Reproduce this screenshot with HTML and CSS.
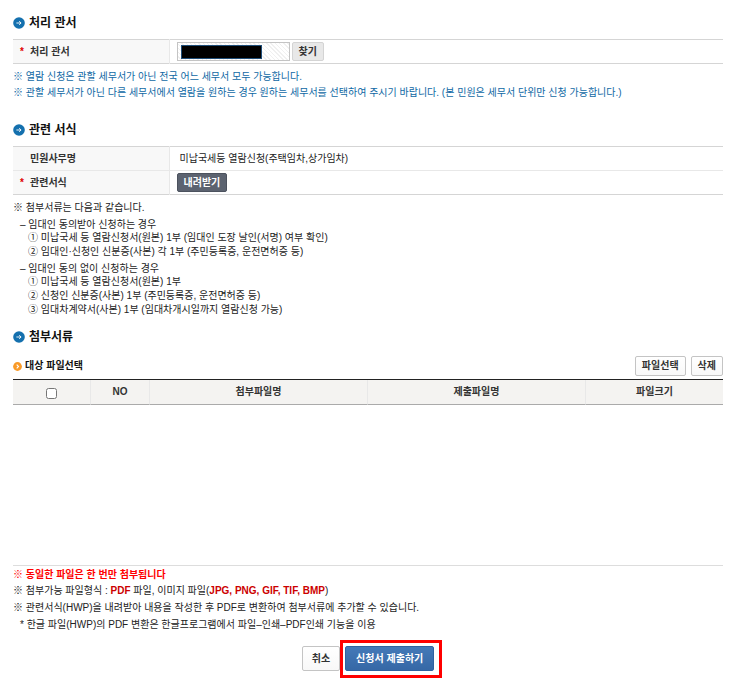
FILE: index.html
```html
<!DOCTYPE html>
<html lang="ko">
<head>
    <meta charset="UTF-8">
    <meta name="viewport" content="width=device-width, initial-scale=1.0">
    <title>미납국세등 열람신청</title>
    <link rel="stylesheet" href="styles.css">
</head>
<body>
    <form class="container">
        <!-- 처리 관서 -->
        <section class="section">
            <h2 class="title">
                <svg class="title-icon" viewBox="0 0 12 12"><circle cx="6" cy="6" r="5.8" fill="#1470ae"/><path d="M3.4 6h4.6M6.2 4.2L8.1 6 6.2 7.8" fill="none" stroke="#fff" stroke-width="0.9"/></svg>
                처리 관서
            </h2>
            <table class="form-table">
                <tr>
                    <th><span class="required">*</span><label for="office">처리 관서</label></th>
                    <td>
                        <div class="office">
                            <input type="text" id="office" class="office-input" readonly>
                            <span class="office-mask"></span>
                            <button type="button" class="btn btn-gray">찾기</button>
                        </div>
                    </td>
                </tr>
            </table>
            <div class="notice">
                <p>※ 열람 신청은 관할 세무서가 아닌 전국 어느 세무서 모두 가능합니다.</p>
                <p>※ 관할 세무서가 아닌 다른 세무서에서 열람을 원하는 경우 원하는 세무서를 선택하여 주시기 바랍니다. (본 민원은 세무서 단위만 신청 가능합니다.)</p>
            </div>
        </section>

        <!-- 관련 서식 -->
        <section class="section">
            <h2 class="title">
                <svg class="title-icon" viewBox="0 0 12 12"><circle cx="6" cy="6" r="5.8" fill="#1470ae"/><path d="M3.4 6h4.6M6.2 4.2L8.1 6 6.2 7.8" fill="none" stroke="#fff" stroke-width="0.9"/></svg>
                관련 서식
            </h2>
            <table class="form-table">
                <tr>
                    <th><span class="required"></span>민원사무명</th>
                    <td><span class="form-name">미납국세등 열람신청(주택임차,상가임차)</span></td>
                </tr>
                <tr>
                    <th><span class="required">*</span>관련서식</th>
                    <td><button type="button" class="btn btn-dark">내려받기</button></td>
                </tr>
            </table>
            <div class="guide">
                <p>※ 첨부서류는 다음과 같습니다.</p>
                <div class="guide-group">
                    <p>– 임대인 동의받아 신청하는 경우</p>
                    <ul>
                        <li>① 미납국세 등 열람신청서(원본) 1부 (임대인 도장 날인(서명) 여부 확인)</li>
                        <li>② 임대인·신청인 신분증(사본) 각 1부 (주민등록증, 운전면허증 등)</li>
                    </ul>
                </div>
                <div class="guide-group">
                    <p>– 임대인 동의 없이 신청하는 경우</p>
                    <ul>
                        <li>① 미납국세 등 열람신청서(원본) 1부</li>
                        <li>② 신청인 신분증(사본) 1부 (주민등록증, 운전면허증 등)</li>
                        <li>③ 임대차계약서(사본) 1부 (임대차개시일까지 열람신청 가능)</li>
                    </ul>
                </div>
            </div>
        </section>

        <!-- 첨부서류 -->
        <section class="section">
            <h2 class="title">
                <svg class="title-icon" viewBox="0 0 12 12"><circle cx="6" cy="6" r="5.8" fill="#1470ae"/><path d="M3.4 6h4.6M6.2 4.2L8.1 6 6.2 7.8" fill="none" stroke="#fff" stroke-width="0.9"/></svg>
                첨부서류
            </h2>
            <div class="file-header">
                <h3 class="subtitle">
                    <svg class="subtitle-icon" viewBox="0 0 9 9"><circle cx="4.5" cy="4.5" r="4.4" fill="#f99a28"/><path d="M3.7 2.7l1.8 1.8-1.8 1.8" fill="none" stroke="#fff" stroke-width="1.1"/></svg>
                    대상 파일선택
                </h3>
                <div class="file-buttons">
                    <button type="button" class="btn">파일선택</button>
                    <button type="button" class="btn">삭제</button>
                </div>
            </div>
            <div class="file-list">
                <table class="file-table">
                    <thead>
                        <tr>
                            <th class="col-check"><input type="checkbox" class="check-all" aria-label="전체 선택"></th>
                            <th class="col-no">NO</th>
                            <th class="col-name">첨부파일명</th>
                            <th class="col-name">제출파일명</th>
                            <th>파일크기</th>
                        </tr>
                    </thead>
                </table>
            </div>
            <div class="file-notice">
                <p class="warning">※ 동일한 파일은 한 번만 첨부됩니다</p>
                <p>※ 첨부가능 파일형식 : <strong>PDF</strong> 파일, 이미지 파일(<strong>JPG, PNG, GIF, TIF, BMP</strong>)</p>
                <p>※ 관련서식(HWP)을 내려받아 내용을 작성한 후 PDF로 변환하여 첨부서류에 추가할 수 있습니다.</p>
                <p class="sub">* 한글 파일(HWP)의 PDF 변환은 한글프로그램에서 파일–인쇄–PDF인쇄 기능을 이용</p>
            </div>
        </section>

        <div class="actions">
            <button type="button" class="btn btn-large">취소</button>
            <div class="submit">
                <button type="submit" class="btn btn-large btn-blue">신청서 제출하기</button>
            </div>
        </div>
    </form>
</body>
</html>
```

FILE: styles.css
```css
* {
    box-sizing: border-box;
}

body {
    margin: 0;
    background: #fff;
    color: #222;
    font-family: "Liberation Sans", "Noto Sans CJK KR", sans-serif;
    font-size: 10px;
    line-height: 14px;
}

h2, h3, p, ul {
    margin: 0;
    padding: 0;
}

ul {
    list-style: none;
}

.container {
    padding: 15px 25px 0 13px;
}

.title {
    display: flex;
    align-items: center;
    gap: 4px;
    height: 15px;
    font-size: 12px;
    color: #111;
}

.title-icon {
    width: 12px;
    height: 12px;
}

/* 입력 테이블 */
.form-table {
    width: 100%;
    margin-top: 9px;
    border-collapse: collapse;
    border-top: 1px solid #d5d5d5;
    border-bottom: 1px solid #d5d5d5;
}

.form-table tr + tr {
    border-top: 1px solid #e8e8e8;
}

.form-table th {
    width: 156px;
    height: 24px;
    padding: 0 0 0 7px;
    background: #f8f8f8;
    border-right: 1px solid #e8e8e8;
    text-align: left;
    color: #333;
}

.form-table td {
    padding: 0 0 0 7px;
}

.required {
    display: inline-block;
    width: 10px;
    color: #e00000;
}

.form-name {
    padding-left: 3px;
}

.office {
    position: relative;
    display: flex;
    align-items: center;
    gap: 2px;
}

.office-input {
    width: 113px;
    height: 19px;
    padding: 0 4px;
    border: 1px solid #c4c4c4;
    background: repeating-linear-gradient(45deg, #fff 0, #fff 2px, #f0f0f0 2px, #f0f0f0 3px);
    font: inherit;
}

.office-mask {
    position: absolute;
    left: 4px;
    top: 3px;
    width: 81px;
    height: 14px;
    background: #000;
    border: 1px solid #1f4e79;
}

/* 버튼 */
.btn {
    display: block;
    height: 20px;
    padding: 0 6px;
    border: 1px solid #c4c4c4;
    border-radius: 2px;
    background: #fff;
    background: linear-gradient(#fff, #f8f8f8);
    font: inherit;
    font-weight: bold;
    line-height: 16px;
    color: #333;
    cursor: pointer;
}

.btn-gray {
    height: 19px;
    border-color: #d4d4d4;
    background: #e8e8e8;
}

.btn-dark {
    height: 19px;
    border-color: #4c525e;
    background: #5c6370;
    color: #fff;
}

.btn-large {
    height: 25px;
    padding: 0 9px;
    line-height: 22px;
}

.btn-blue {
    padding: 0 10px;
    border-color: #2f62a0;
    background: linear-gradient(#4479b8, #3668a6);
    color: #fff;
}

/* 안내 문구 */
.notice {
    padding: 5px 0 21px;
    line-height: 16px;
    color: #0f68a4;
}

.guide {
    padding: 6px 0 12px;
}

.guide-group {
    margin-top: 3px;
    padding-left: 7px;
}

.guide-group p {
    line-height: 13px;
}

.guide-group ul {
    padding-left: 8px;
}

/* 첨부파일 */
.file-header {
    display: flex;
    justify-content: space-between;
    align-items: center;
    margin-top: 12px;
}

.subtitle {
    display: flex;
    align-items: center;
    gap: 3px;
    font-size: 10px;
    color: #111;
}

.subtitle-icon {
    width: 9px;
    height: 9px;
}

.file-buttons {
    display: flex;
    gap: 5px;
}

.file-list {
    height: 187px;
    margin-top: 3px;
    border-top: 1px solid #222;
    border-bottom: 1px solid #ddd;
    overflow: auto;
}

.file-table {
    width: 100%;
    table-layout: fixed;
    border-spacing: 0;
}

.file-table th {
    height: 25px;
    padding: 0;
    background: #f4f3f1;
    border-bottom: 1px solid #aaa;
    color: #333;
}

.file-table th + th {
    border-left: 1px solid #e8e8e8;
}

.col-check {
    width: 77px;
}

.col-no {
    width: 59px;
}

.col-name {
    width: 30.7%;
}

.check-all {
    display: block;
    width: 11px;
    height: 11px;
    margin: 2px auto 0;
}

.file-notice {
    line-height: 17px;
}

.file-notice strong {
    color: #c00;
}

.file-notice .warning {
    padding-top: 1px;
    color: #f00;
    font-weight: bold;
    line-height: 15px;
}

.file-notice .sub {
    padding-left: 7px;
}

/* 하단 버튼 */
.actions {
    display: flex;
    justify-content: center;
    gap: 5px;
    margin-top: 13px;
    padding-bottom: 8px;
}

.submit {
    position: relative;
}

.submit::after {
    content: "";
    position: absolute;
    inset: -6px -8px -7px -5px;
    border: 3px solid #f00;
    pointer-events: none;
}
```
